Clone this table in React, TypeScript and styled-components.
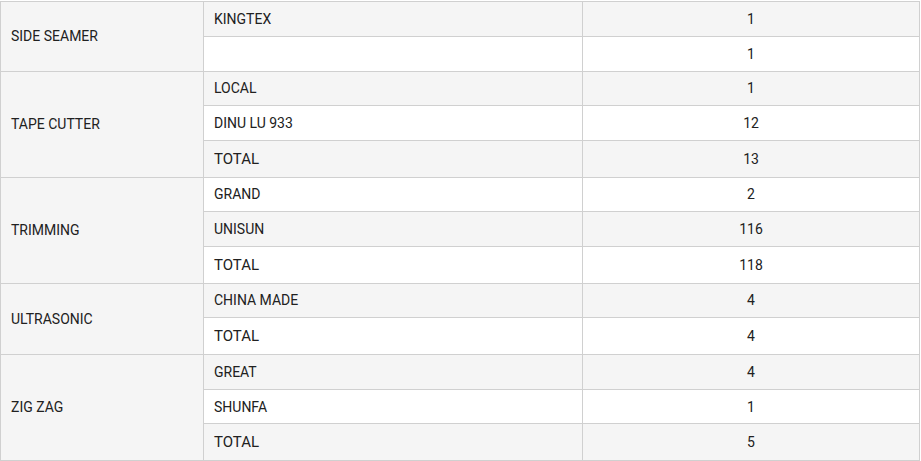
import React from "react";
import styled, { createGlobalStyle } from "styled-components";

const GlobalStyle = createGlobalStyle`
  html, body {
    margin: 0;
    padding: 0;
    background: #ffffff;
  }
  body {
    font-family: Roboto, "Noto Sans", "Liberation Sans", sans-serif;
    color: #212121;
  }
`;

const Page = styled.div`
  padding-top: 1px;
`;

const Grid = styled.div<{ $rows: string }>`
  display: grid;
  width: 920px;
  box-sizing: border-box;
  grid-template-columns: 202px 378px 336px;
  grid-template-rows: ${(p) => p.$rows};
  gap: 1px;
  padding: 1px;
  background: #d0d0d0;
`;

const GroupCell = styled.div<{ $span: number }>`
  grid-row: span ${(p) => p.$span};
  grid-column: 1;
  background: #f5f5f5;
  display: flex;
  align-items: center;
  padding-left: 10px;
  font-size: 14px;
  color: #212121;
`;

const NameCell = styled.div<{ $shade: boolean; $total: boolean }>`
  grid-column: 2;
  background: ${(p) => (p.$shade ? "#f5f5f5" : "#ffffff")};
  display: flex;
  align-items: center;
  padding-left: 10px;
  font-size: ${(p) => (p.$total ? "15px" : "14px")};
  color: #212121;
`;

const CountCell = styled.div<{ $shade: boolean }>`
  grid-column: 3;
  background: ${(p) => (p.$shade ? "#f5f5f5" : "#ffffff")};
  display: flex;
  align-items: center;
  justify-content: center;
  font-size: 14px;
  color: #212121;
`;

type Row = { name: string; count: number; total?: boolean };
type Group = { label: string; rows: Row[] };

const groups: Group[] = [
  {
    label: "SIDE SEAMER",
    rows: [
      { name: "KINGTEX", count: 1 },
      { name: "", count: 1 },
    ],
  },
  {
    label: "TAPE CUTTER",
    rows: [
      { name: "LOCAL", count: 1 },
      { name: "DINU LU 933", count: 12 },
      { name: "TOTAL", count: 13, total: true },
    ],
  },
  {
    label: "TRIMMING",
    rows: [
      { name: "GRAND", count: 2 },
      { name: "UNISUN", count: 116 },
      { name: "TOTAL", count: 118, total: true },
    ],
  },
  {
    label: "ULTRASONIC",
    rows: [
      { name: "CHINA MADE", count: 4 },
      { name: "TOTAL", count: 4, total: true },
    ],
  },
  {
    label: "ZIG ZAG",
    rows: [
      { name: "GREAT", count: 4 },
      { name: "SHUNFA", count: 1 },
      { name: "TOTAL", count: 5, total: true },
    ],
  },
];

export default function App() {
  const allRows = groups.flatMap((g) => g.rows);
  const rowTemplate = allRows
    .map((r) => (r.total ? "35.5px" : "33.78px"))
    .join(" ");
  let index = 0;
  return (
    <Page>
      <GlobalStyle />
      <Grid $rows={rowTemplate}>
        {groups.map((g) => (
          <React.Fragment key={g.label}>
            <GroupCell $span={g.rows.length}>{g.label}</GroupCell>
            {g.rows.map((r, i) => {
              const shade = index % 2 === 0;
              index += 1;
              return (
                <React.Fragment key={i}>
                  <NameCell $shade={shade} $total={!!r.total}>
                    {r.name}
                  </NameCell>
                  <CountCell $shade={shade}>{r.count}</CountCell>
                </React.Fragment>
              );
            })}
          </React.Fragment>
        ))}
      </Grid>
    </Page>
  );
}
